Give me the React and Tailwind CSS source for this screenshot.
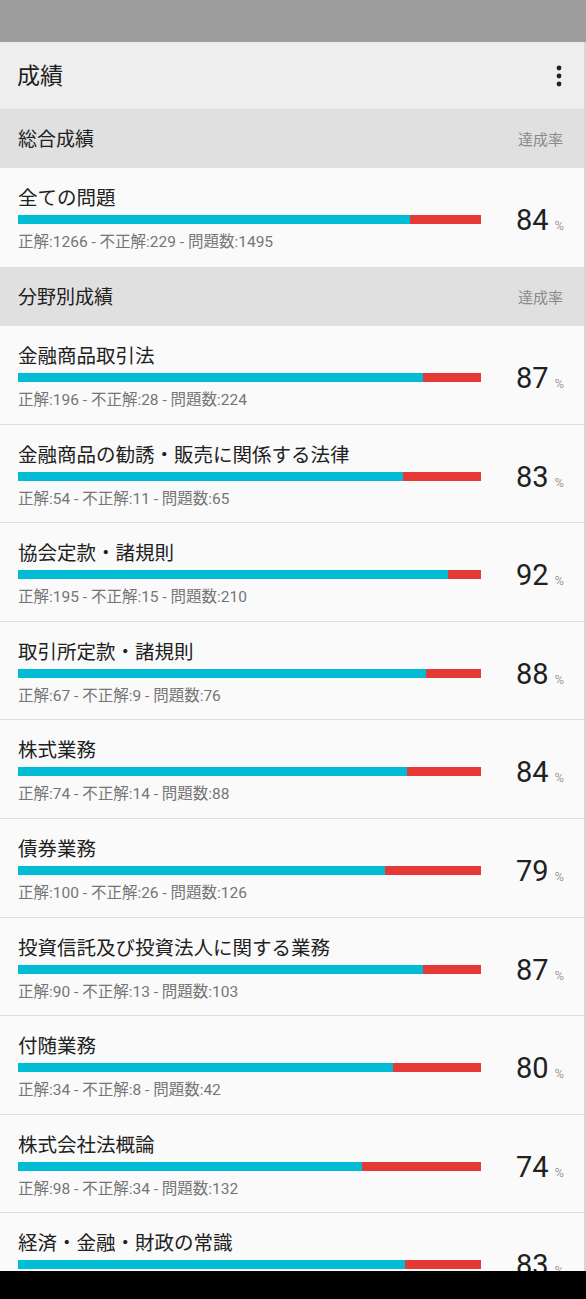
import React from "react";

const overall = { title: "全ての問題", ok: 1266, ng: 229, total: 1495, pct: 84 };
const items = [
  { title: "金融商品取引法", ok: 196, ng: 28, total: 224, pct: 87 },
  { title: "金融商品の勧誘・販売に関係する法律", ok: 54, ng: 11, total: 65, pct: 83 },
  { title: "協会定款・諸規則", ok: 195, ng: 15, total: 210, pct: 92 },
  { title: "取引所定款・諸規則", ok: 67, ng: 9, total: 76, pct: 88 },
  { title: "株式業務", ok: 74, ng: 14, total: 88, pct: 84 },
  { title: "債券業務", ok: 100, ng: 26, total: 126, pct: 79 },
  { title: "投資信託及び投資法人に関する業務", ok: 90, ng: 13, total: 103, pct: 87 },
  { title: "付随業務", ok: 34, ng: 8, total: 42, pct: 80 },
  { title: "株式会社法概論", ok: 98, ng: 34, total: 132, pct: 74 },
  { title: "経済・金融・財政の常識", ok: 97, ng: 19, total: 116, pct: 83 },
];

const font = { fontFamily: '"Roboto", "Noto Sans CJK JP", sans-serif' };

function SectionHeader({ title }) {
  return (
    <div className="h-[58px] shrink-0 bg-[#e0e0e0] flex items-center justify-between pl-[18px] pr-[21px] pt-[3px]">
      <span className="text-[19px] text-[#212121]">{title}</span>
      <span className="text-[15px] text-[#8a8a8a]">達成率</span>
    </div>
  );
}

function Row({ d, h }) {
  const ratio = d.ok / d.total;
  return (
    <div className={`${h} shrink-0 flex border-b border-[#dedede] bg-[#fafafa]`}>
      <div className="ml-[18px] w-[463px] pt-[19px] flex flex-col">
        <div className="text-[19.5px] leading-[24px] text-[#212121] whitespace-nowrap">{d.title}</div>
        <div className="mt-[4px] h-[9px] flex bg-[#e53935]">
          <div className="h-full bg-[#00bcd4]" style={{ width: `${ratio * 100}%` }} />
        </div>
        <div className="mt-[9px] text-[15.5px] leading-[18px] text-[#757575] whitespace-nowrap">
          正解:{d.ok} - 不正解:{d.ng} - 問題数:{d.total}
        </div>
      </div>
      <div className="ml-[35px] pt-[38px] flex items-baseline">
        <span className="text-[29px] leading-[29px] text-[#212121]">{d.pct}</span>
        <span className="ml-[6px] text-[13px] text-[#9e9e9e]">%</span>
      </div>
    </div>
  );
}

export default function App() {
  return (
    <div className="w-[586px] h-[1299px] overflow-hidden flex flex-col bg-[#fafafa]" style={font}>
      <div className="h-[42px] shrink-0 bg-[#9e9e9e]" />
      <div className="flex-1 flex flex-col overflow-hidden border-r-2 border-[#d6d6d6]">
        <div className="h-[68px] shrink-0 bg-[#eeeeee] flex items-center justify-between pl-[17px] pr-[22px] border-b border-[#dadada]">
          <span className="text-[23px] leading-[30px] mt-[3px] text-[#212121]">成績</span>
          <svg width="6" height="22" viewBox="0 0 6 22">
            <circle cx="3" cy="3" r="2.4" fill="#212121" />
            <circle cx="3" cy="11" r="2.4" fill="#212121" />
            <circle cx="3" cy="19" r="2.4" fill="#212121" />
          </svg>
        </div>
        <SectionHeader title="総合成績" />
        <Row d={overall} h="h-[100px]" />
        <SectionHeader title="分野別成績" />
        {items.map((d) => (
          <Row key={d.title} d={d} h="h-[98.6px]" />
        ))}
      </div>
      <div className="h-[28px] shrink-0 bg-black" />
    </div>
  );
}
